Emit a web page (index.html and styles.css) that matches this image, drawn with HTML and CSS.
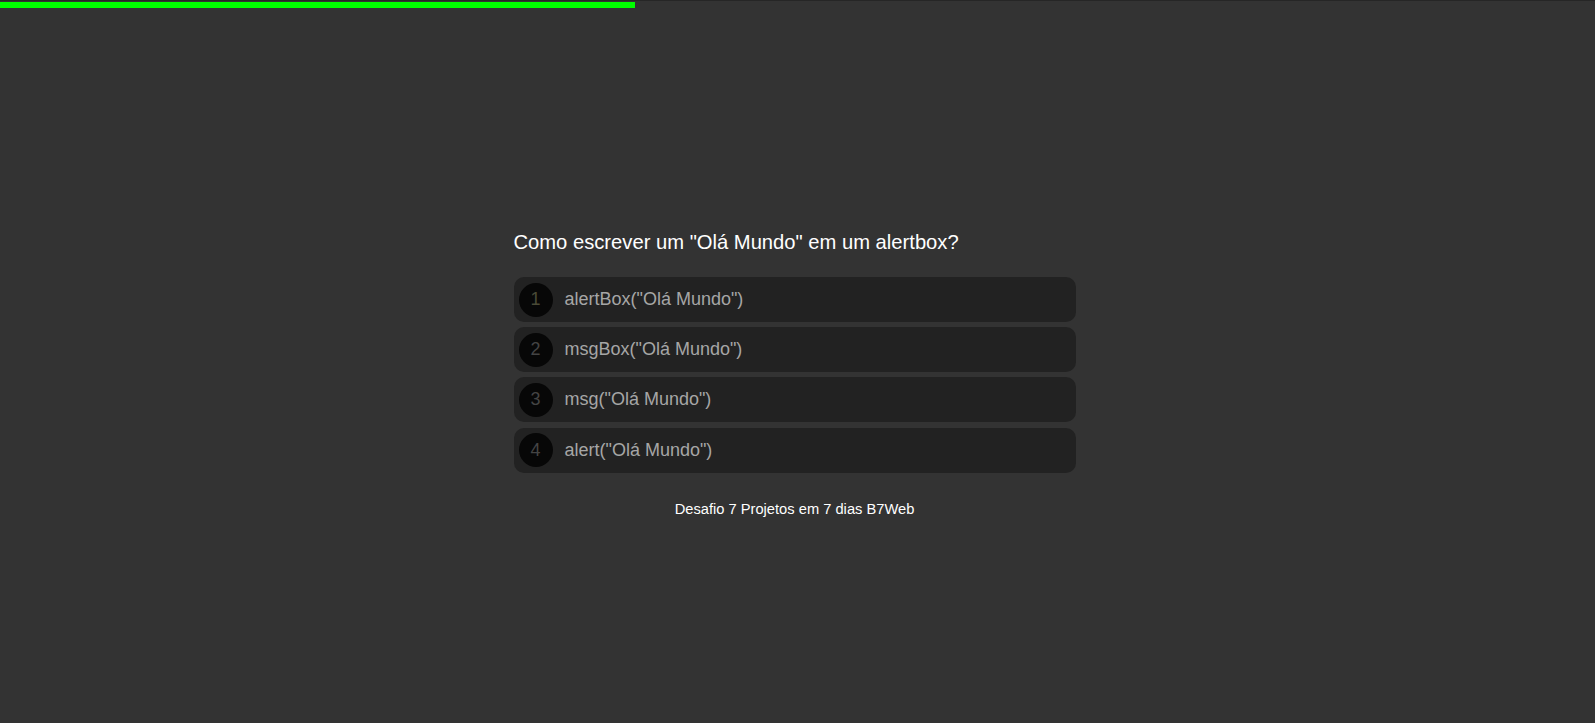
FILE: index.html
```html
<!DOCTYPE html>
<html lang="pt-BR">
<head>
<meta charset="utf-8">
<title>Quiz</title>
<link rel="stylesheet" href="styles.css">
</head>
<body>
<div class="progress"><div class="progress-bar" style="width: 635px"></div></div>
<main class="quiz">
  <h1 class="question">Como escrever um "Olá Mundo" em um alertbox?</h1>
  <div class="options">
    <div class="option"><span class="num num-first">1</span><span class="label">alertBox("Olá Mundo")</span></div>
    <div class="option"><span class="num">2</span><span class="label">msgBox("Olá Mundo")</span></div>
    <div class="option"><span class="num">3</span><span class="label">msg("Olá Mundo")</span></div>
    <div class="option"><span class="num">4</span><span class="label">alert("Olá Mundo")</span></div>
  </div>
  <footer class="footer">Desafio 7 Projetos em 7 dias B7Web</footer>
</main>
</body>
</html>
```

FILE: styles.css
```css
html, body {
  margin: 0;
  padding: 0;
}
body {
  background: #333333;
  font-family: "Liberation Sans", Arial, sans-serif;
  color: #ffffff;
  min-height: 723px;
}
.progress {
  border-top: 1px solid #262626;
  padding-top: 1px;
  height: 6px;
}
.progress-bar {
  height: 6px;
  background: #00ff00;
}
.quiz {
  width: 562px;
  margin: 223px 0 0 calc(50% - 284px);
  display: flex;
  flex-direction: column;
}
.question {
  margin: 0 0 23px;
  font-size: 20.2px;
  font-weight: normal;
  line-height: 23px;
}
.options {
  display: flex;
  flex-direction: column;
  gap: 5.2px;
}
.option {
  height: 45px;
  box-sizing: border-box;
  background: #222222;
  border-radius: 10px;
  display: flex;
  align-items: center;
  padding-left: 5px;
  gap: 12px;
}
.num {
  width: 34px;
  height: 34px;
  border-radius: 50%;
  background: #070707;
  color: #444444;
  font-size: 18px;
  display: flex;
  align-items: center;
  justify-content: center;
}
.num-first {
  color: #4a4a36;
}
.label {
  font-size: 18px;
  color: #a6a6a6;
}
.footer {
  margin-top: 28px;
  text-align: center;
  font-size: 14.7px;
  line-height: 17px;
}
```
